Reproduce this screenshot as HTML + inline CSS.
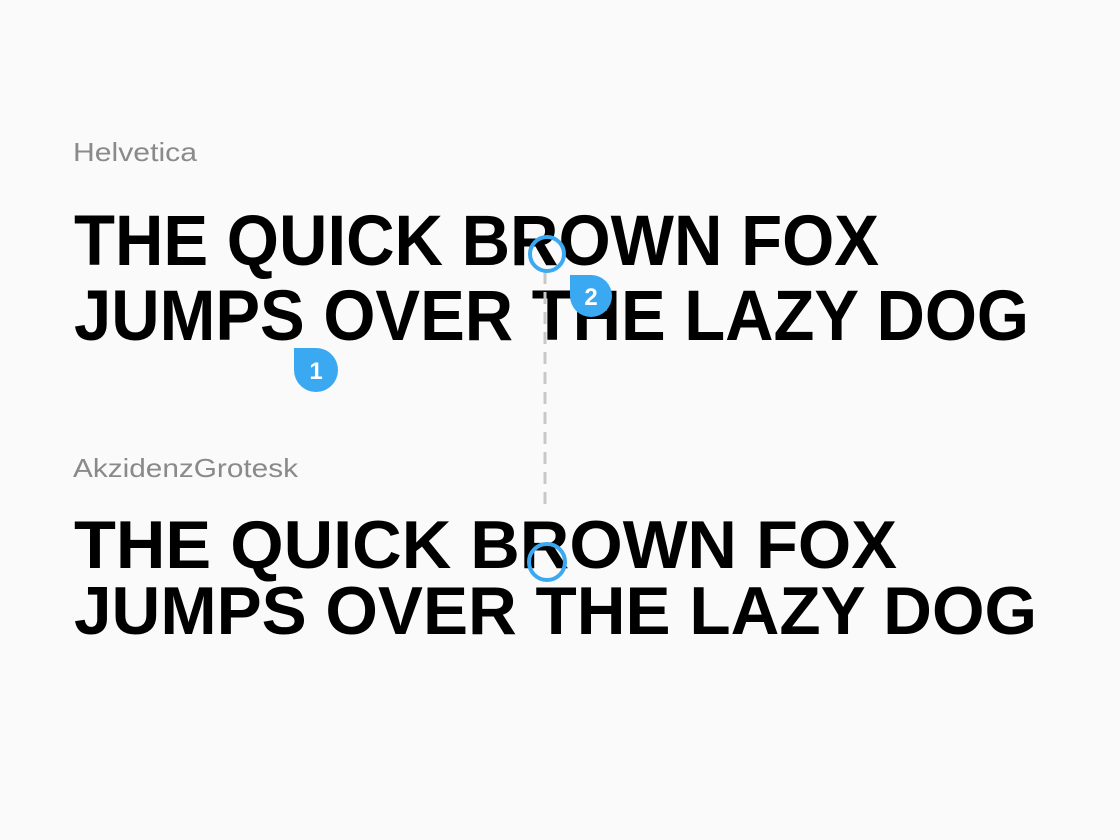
<!DOCTYPE html>
<html><head><meta charset="utf-8"><style>
html,body{margin:0;padding:0;background:#fafafa;width:1120px;height:840px;overflow:hidden}
svg{display:block}
</style></head><body>
<svg width="1120" height="840" viewBox="0 0 1120 840" xmlns="http://www.w3.org/2000/svg">
<rect width="1120" height="840" fill="#fafafa"/>
<g font-family="Liberation Sans, sans-serif">
<text x="73" y="161" font-size="26" fill="#8a8a8a" textLength="124" lengthAdjust="spacingAndGlyphs">Helvetica</text>
<text x="73" y="477" font-size="26" fill="#8a8a8a" textLength="225" lengthAdjust="spacingAndGlyphs">AkzidenzGrotesk</text>
<g font-weight="bold" fill="#000">
<text x="74" y="265" font-size="71" textLength="805" lengthAdjust="spacingAndGlyphs">THE QUICK BROWN FOX</text>
<text x="74" y="340" font-size="71" textLength="955" lengthAdjust="spacingAndGlyphs">JUMPS OVER THE LAZY DOG</text>
<text x="74" y="568" font-size="68" textLength="823" lengthAdjust="spacingAndGlyphs">THE QUICK BROWN FOX</text>
<text x="74" y="634" font-size="68" textLength="963" lengthAdjust="spacingAndGlyphs">JUMPS OVER THE LAZY DOG</text>
</g>
</g>
<line x1="545" y1="272" x2="545" y2="508" stroke="#c8c8c8" stroke-width="3" stroke-dasharray="12 8"/>
<circle cx="547" cy="254" r="17" fill="none" stroke="#3aa9f2" stroke-width="4"/>
<circle cx="547" cy="562" r="18" fill="none" stroke="#3aa9f2" stroke-width="4"/>
<path d="M570 275 H591 A21 21 0 1 1 570 296 Z" fill="#3aa9f2"/>
<text x="591" y="305" font-family="Liberation Sans, sans-serif" font-weight="bold" font-size="24" fill="#fff" text-anchor="middle">2</text>
<path d="M294 348 H316 A22 22 0 1 1 294 370 Z" fill="#3aa9f2"/>
<text x="316" y="379" font-family="Liberation Sans, sans-serif" font-weight="bold" font-size="24" fill="#fff" text-anchor="middle">1</text>
</svg>
</body></html>
